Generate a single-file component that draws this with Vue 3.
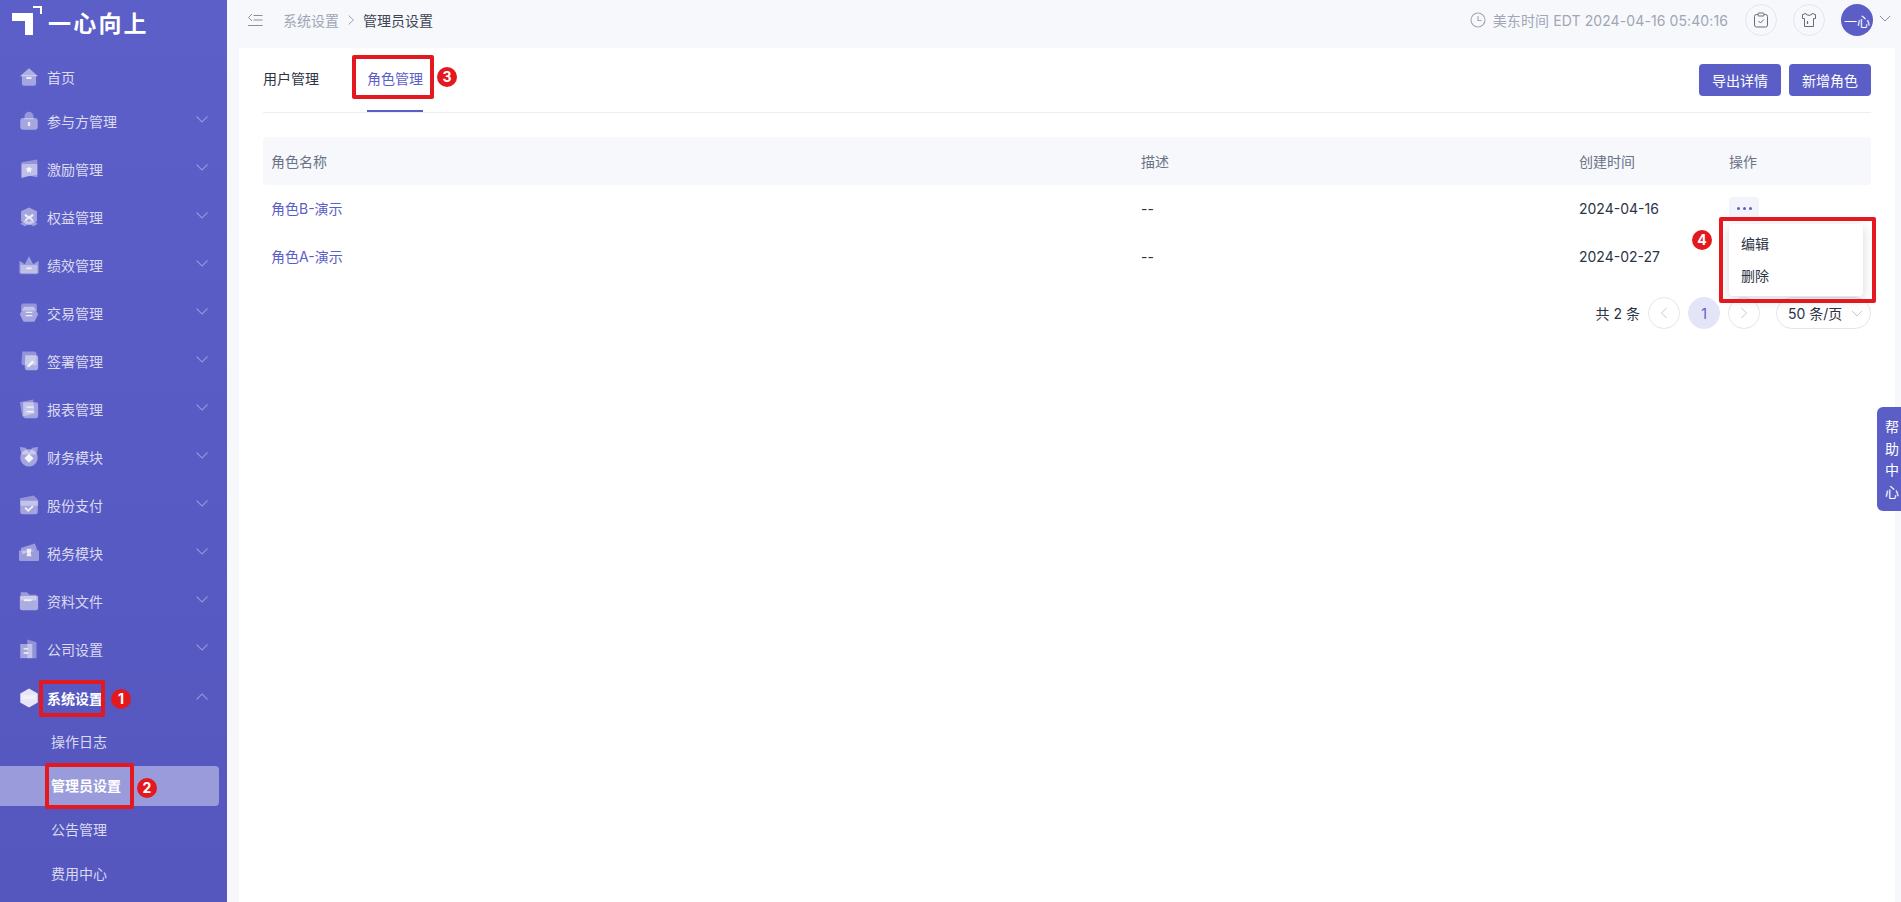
<script setup>
const shapes = {
  home: [['M12 1.500 23 11H1Z', .5], ['M3.500 10h17v9.500a3 3 0 0 1-3 3h-11a3 3 0 0 1-3-3Z', .45], ['M9 12h6v2.400H9Z', .8]],
  people: [['M12 1a5.500 5.500 0 0 1 5.500 5.500V10h-11V6.500A5.500 5.500 0 0 1 12 1Z', .35], ['M5 8.500h14a3.500 3.500 0 0 1 3.500 3.500v7a3.500 3.500 0 0 1-3.500 3.500H5A3.500 3.500 0 0 1 1.500 19v-7A3.500 3.500 0 0 1 5 8.500Z', .45], ['M12 13a1.500 1.500 0 0 1 1.400 2v3h-2.800v-3A1.500 1.500 0 0 1 12 13Z', .8]],
  flag: [['M3 4 22 .5V19l-19 3Z', .35], ['M3 6h19v16l-9.500-2L3 23Z', .4], ['M12 8.500l1.300 2.600 2.800.4-2 2 .5 2.800-2.600-1.400-2.600 1.400.5-2.800-2-2 2.800-.4Z', .85]],
  shield: [['M12 .5 21.500 5v12L12 22l-9.500-5V5Z', .45], ['M1.500 20l7-4 3.500 2 3.500-2 7 4-5 3-5.500-2.500L7 23Z', .4], ['M7.500 8l4.500 3 4.500-3 1 2.500-3 2.500 3 3-1 1-4.500-3-4.500 3-1-1 3-3-3-2.500Z', .8]],
  crown: [['M.5 7l6.500 4L12 1.500 17 11l6.500-4v15H.5Z', .4], ['M2 12h20v11H2Z', .35], ['M9 15h6v2H9Z', .8]],
  swap: [['M5 .5h14a2.500 2.500 0 0 1 2.500 2.500v6h-19V3A2.500 2.500 0 0 1 5 .5Z', .35], ['M6 4.500h12l5 9-4.500 9h-13L1 13.500Z', .45], ['M8 10.500h8v1.400H8ZM8 14.500h8v1.400H8Z', .8]],
  sign: [['M4 .5h14a3 3 0 0 1 3 3V17H6a3 3 0 0 1-3-3Z', .35], ['M7.500 5h13A2.500 2.500 0 0 1 23 7.500v13a2.500 2.500 0 0 1-2.500 2.500h-11A2.500 2.500 0 0 1 7 20.500Z', .5], ['M10 17.500l6-6 2 2-6 6h-2Z', .85]],
  report: [['M1 4 17 .5l2 17L4 21Z', .35], ['M5 4h15.500A2.500 2.500 0 0 1 23 6.500v14a2.500 2.500 0 0 1-2.500 2.500H7.500A2.500 2.500 0 0 1 5 20.500Z', .45], ['M9 9h8.500v1.600H9ZM9 14.500h8.500v1.600H9Z', .8]],
  medal: [['M1 0 8 1l4 6 4-6 7-1-2 9H3Z', .4], ['M12 2.500a10.500 10.500 0 1 1 0 21 10.500 10.500 0 0 1 0-21Z', .45], ['M12 8l5.500 5.500L12 19l-5.500-5.500Z', .9]],
  folderCheck: [['M1 4 18 .5 23 6v7H2Z', .35], ['M1.500 7h21v13a3 3 0 0 1-3 3h-15a3 3 0 0 1-3-3Z', .45], ['M8 14.500l3 3 5-5 1.500 1.500-6.500 6.500-4.500-4.500Z', .85]],
  ticket: [['M2 6 19 .5l3 8-18 5Z', .4], ['M0 9h24v11a1.500 1.500 0 0 1-1.500 1.500h-21A1.500 1.500 0 0 1 0 20Z', .4], ['M9 7h6l-1 4.500 1 4.500H9l1-4.500Z', .8]],
  folder: [['M2 1.500h7.500l3 3H21v7H2Z', .4], ['M1 6h22v14a3 3 0 0 1-3 3H4a3 3 0 0 1-3-3Z', .5], ['M6 10h9v2.200H6Z', .8]],
  company: [['M10 .5 21 4v19H10Z', .35], ['M1.500 6H16v17H1.500Z', .45], ['M5.500 11h5.500v1.600H5.500ZM5.500 16h5.500v1.600H5.500Z', .9]],
  system: [['M12 .5 22.500 6.500v11L12 23.500 1.500 17.500v-11Z', .85], ['M3 8.500h18v5.500H3Z', .35], ['M7 10.500h10v1.500H7Z', .5]],
}

const navItems = [
  { label: '首页', icon: 'home' },
  { label: '参与方管理', icon: 'people', arrow: true },
  { label: '激励管理', icon: 'flag', arrow: true },
  { label: '权益管理', icon: 'shield', arrow: true },
  { label: '绩效管理', icon: 'crown', arrow: true },
  { label: '交易管理', icon: 'swap', arrow: true },
  { label: '签署管理', icon: 'sign', arrow: true },
  { label: '报表管理', icon: 'report', arrow: true },
  { label: '财务模块', icon: 'medal', arrow: true },
  { label: '股份支付', icon: 'folderCheck', arrow: true },
  { label: '税务模块', icon: 'ticket', arrow: true },
  { label: '资料文件', icon: 'folder', arrow: true },
  { label: '公司设置', icon: 'company', arrow: true },
  { label: '系统设置', icon: 'system', arrow: true, open: true },
]

const subItems = [
  { label: '操作日志' },
  { label: '管理员设置', active: true },
  { label: '公告管理' },
  { label: '费用中心' },
]

const roles = [
  { name: '角色B-演示', desc: '--', created: '2024-04-16', more: true },
  { name: '角色A-演示', desc: '--', created: '2024-02-27' },
]
</script>

<template>
  <div class="page">
    <aside class="sidebar">
      <div class="logo">
        <svg class="logo-mark" width="31" height="30" viewBox="0 0 31 30">
          <path d="M1 7h21v22h-8V15H1Z" fill="#fff" />
          <path d="M22 0h9v8h-2V2h-7Z" fill="#fff" />
        </svg>
        <span class="logo-text">一心向上</span>
      </div>

      <nav class="menu">
        <div
          v-for="item in navItems"
          :key="item.label"
          class="menu-item"
          :class="{ open: item.open }"
        >
          <svg class="menu-icon" width="20" height="20" viewBox="0 0 24 24">
            <path v-for="(s, i) in shapes[item.icon]" :key="i" :d="s[0]" fill="#fff" :fill-opacity="s[1]" />
          </svg>
          <span class="menu-label">{{ item.label }}</span>
          <svg v-if="item.arrow" class="menu-arrow" width="12" height="7" viewBox="0 0 12 7">
            <path :d="item.open ? 'M.5 6.500 6 1l5.500 5.500' : 'M.5 .5 6 6l5.500-5.500'" fill="none" stroke="currentColor" stroke-width="1.100" />
          </svg>
        </div>
        <div
          v-for="sub in subItems"
          :key="sub.label"
          class="sub-item"
          :class="{ active: sub.active }"
        >{{ sub.label }}</div>
      </nav>
    </aside>

    <div class="main">
      <header class="topbar">
        <svg class="collapse" width="16" height="14" viewBox="0 0 16 14">
          <path d="M5 1 1.500 4.500 5 8M6.500 2.500H15.500M6.500 7H15.500M1 12.500H15.500" fill="none" stroke="#8b90a0" stroke-width="1" />
        </svg>
        <div class="crumbs">
          <span class="crumb-muted">系统设置</span>
          <svg width="8" height="12" viewBox="0 0 8 12"><path d="M1.500 1.500 6.500 6l-5 4.500" fill="none" stroke="#a0a6b5" stroke-width="1" /></svg>
          <span class="crumb-current">管理员设置</span>
        </div>
        <div class="topbar-right">
          <svg width="16" height="16" viewBox="0 0 16 16">
            <circle cx="8" cy="8" r="7" fill="none" stroke="#a0a6b5" stroke-width="1.100" />
            <path d="M8 4v4.500h3.500" fill="none" stroke="#a0a6b5" stroke-width="1.100" />
          </svg>
          <span class="clock">美东时间 EDT 2024-04-16 05:40:16</span>
          <span class="round-btn first">
            <svg width="16" height="16" viewBox="0 0 16 16">
              <rect x="1.500" y="2.500" width="13" height="12.500" rx="2" fill="none" stroke="#666c7e" stroke-width="1" />
              <rect x="5" y="1" width="6" height="3" rx=".8" fill="#f7f8fc" stroke="#666c7e" stroke-width="1" />
              <path d="M5.500 9 7.500 11 10.800 7.500" fill="none" stroke="#666c7e" stroke-width="1" />
            </svg>
          </span>
          <span class="round-btn">
            <svg width="16" height="16" viewBox="0 0 16 16">
              <path d="M5 1.500 1.500 2.500v4h2v8h9v-8h2v-4L11 1.500a3 1.800 0 0 1-6 0Z" fill="none" stroke="#666c7e" stroke-width="1" />
              <path d="M6.500 9v3" stroke="#666c7e" stroke-width="1.200" />
            </svg>
          </span>
          <span class="avatar">一心</span>
          <svg class="avatar-arrow" width="12" height="7" viewBox="0 0 12 7"><path d="M1 1l5 5 5-5" fill="none" stroke="#8b90a0" stroke-width="1" /></svg>
        </div>
      </header>

      <section class="card">
        <div class="tabs-row">
          <div class="tabs">
            <span class="tab">用户管理</span>
            <span class="tab active">角色管理</span>
          </div>
          <div class="actions">
            <button class="primary-btn">导出详情</button>
            <button class="primary-btn">新增角色</button>
          </div>
        </div>

        <div class="table">
          <div class="row head">
            <div>角色名称</div>
            <div>描述</div>
            <div>创建时间</div>
            <div>操作</div>
          </div>
          <div v-for="role in roles" :key="role.name" class="row body-row">
            <div class="role-name">{{ role.name }}</div>
            <div>{{ role.desc }}</div>
            <div>{{ role.created }}</div>
            <div>
              <span v-if="role.more" class="more-btn"><i></i><i></i><i></i></span>
            </div>
          </div>
          <div class="dropdown">
            <div class="dropdown-item">编辑</div>
            <div class="dropdown-item">删除</div>
          </div>
        </div>

        <div class="pager">
          <span class="pager-total">共 2 条</span>
          <span class="pager-btn">
            <svg width="8" height="12" viewBox="0 0 8 12"><path d="M6.500 1 1.500 6l5 5" fill="none" stroke="#c4c8d4" stroke-width="1" /></svg>
          </span>
          <span class="pager-btn current">1</span>
          <span class="pager-btn last">
            <svg width="8" height="12" viewBox="0 0 8 12"><path d="M1.500 1 6.500 6l-5 5" fill="none" stroke="#c4c8d4" stroke-width="1" /></svg>
          </span>
          <span class="pager-size">
            50 条/页
            <svg width="12" height="7" viewBox="0 0 12 7"><path d="M1 1l5 5 5-5" fill="none" stroke="#c4c8d4" stroke-width="1" /></svg>
          </span>
        </div>
      </section>
    </div>

    <div class="help">帮<br />助<br />中<br />心</div>

    <!-- tutorial markers drawn over the screenshot -->
    <span class="mark mark-a"></span>
    <span class="mark mark-b"></span>
    <span class="mark mark-c"></span>
    <span class="mark mark-d"></span>
    <span class="badge badge-a">1</span>
    <span class="badge badge-b">2</span>
    <span class="badge badge-c">3</span>
    <span class="badge badge-d">4</span>
  </div>
</template>

<style>
html, body {
  margin: 0;
  overflow: hidden;
}
</style>

<style scoped>
.page {
  position: relative;
  display: flex;
  height: 902px;
  overflow: hidden;
  background: #f7f8fc;
  color: #2c3345;
  font-family: Inter, "Noto Sans CJK SC", sans-serif;
  font-size: 14px;
}

.sidebar {
  width: 227px;
  flex: none;
  background: linear-gradient(180deg, #5d5fc9, #5557bf);
}

.logo {
  display: flex;
  align-items: center;
  height: 48px;
  padding-left: 11px;
}

.logo-mark {
  flex: none;
  align-self: flex-start;
  margin-top: 6px;
}

.logo-text {
  margin-left: 6px;
  color: #fff;
  font-size: 23px;
  font-weight: 700;
  letter-spacing: 2.200px;
  line-height: 26px;
}

.menu {
  padding-top: 7px;
}

.menu-item {
  display: flex;
  align-items: center;
  height: 44px;
  margin-bottom: 4px;
  padding-left: 19px;
  padding-right: 19px;
  color: rgba(255, 255, 255, 0.78);
}

.menu-item:first-child {
  margin-bottom: 0;
}

.menu-item.open {
  margin-top: 5px;
  margin-bottom: 0;
  color: #fff;
  font-weight: 700;
}

.menu-icon {
  flex: none;
  filter: blur(0.3px);
}

.menu-label {
  flex: 1;
  margin-left: 8px;
}

.menu-arrow {
  flex: none;
  margin-top: -4px;
  color: rgba(255, 255, 255, 0.35);
}

.sub-item {
  height: 44px;
  margin-right: 8px;
  padding-left: 51px;
  line-height: 44px;
  color: rgba(255, 255, 255, 0.78);
}

.sub-item.active {
  height: 40px;
  margin-top: 2px;
  margin-bottom: 2px;
  border-radius: 0 4px 4px 0;
  background: #9a9bdb;
  color: #fff;
  font-weight: 700;
  line-height: 40px;
}

.main {
  flex: 1;
  min-width: 0;
  display: flex;
  flex-direction: column;
  padding: 0 6px 0 12px;
}

.topbar {
  display: flex;
  align-items: center;
  height: 40px;
  margin-bottom: 8px;
  padding-left: 8px;
}

.collapse {
  flex: none;
}

.crumbs {
  display: flex;
  align-items: center;
  gap: 8px;
  margin-left: 20px;
}

.crumb-muted {
  color: #a0a6b5;
}

.crumb-current {
  color: #3d4456;
}

.topbar-right {
  display: flex;
  align-items: center;
  margin-left: auto;
  margin-right: 4px;
}

.clock {
  margin-left: 7px;
  color: #a0a6b5;
  letter-spacing: 0.100px;
}

.round-btn {
  display: flex;
  align-items: center;
  justify-content: center;
  width: 30px;
  height: 30px;
  margin-left: 16px;
  border: 1px solid #e4e6ee;
  border-radius: 50%;
}

.round-btn.first {
  margin-left: 17px;
}

.avatar {
  display: flex;
  align-items: center;
  justify-content: center;
  width: 32px;
  height: 32px;
  margin-left: 16px;
  border-radius: 50%;
  background: #5b5ec7;
  color: #fff;
  font-size: 13px;
}

.avatar-arrow {
  margin-left: 6px;
  margin-top: -4px;
}

.card {
  flex: 1;
  padding: 16px 24px 0;
  background: #fff;
}

.tabs-row {
  display: flex;
  justify-content: space-between;
  height: 48px;
  border-bottom: 1px solid #eceef6;
}

.tabs {
  display: flex;
  gap: 48px;
}

.tab {
  height: 46px;
  line-height: 30px;
}

.tab.active {
  border-bottom: 2px solid #5b5ec7;
  color: #5b5ec7;
}

.actions {
  display: flex;
  gap: 8px;
}

.primary-btn {
  width: 82px;
  height: 32px;
  padding: 0;
  border: none;
  border-radius: 4px;
  background: #5b5ec7;
  color: #fff;
  font: inherit;
}

.table {
  position: relative;
  margin-top: 24px;
}

.row {
  display: grid;
  grid-template-columns: 870px 438px 150px 1fr;
  align-items: center;
  height: 48px;
  padding-left: 8px;
  box-sizing: border-box;
}

.row.head {
  border-radius: 4px;
  background: #f7f8fc;
  color: #6b7285;
}

.body-row {
  padding-bottom: 2px;
}

.role-name {
  color: #5b5ec7;
}

.more-btn {
  display: flex;
  align-items: center;
  justify-content: center;
  gap: 3px;
  width: 30px;
  height: 24px;
  margin-top: 1px;
  border-radius: 4px;
  background: #f3f4fb;
}

.more-btn i {
  width: 3px;
  height: 3px;
  border-radius: 50%;
  background: #5b5ec7;
}

.dropdown {
  position: absolute;
  top: 87px;
  left: 1466px;
  width: 134px;
  padding: 4px 0;
  border-radius: 4px;
  background: #fff;
  box-shadow: 0 3px 12px rgba(30, 35, 70, 0.18);
}

.dropdown-item {
  height: 32px;
  padding-left: 12px;
  line-height: 32px;
}

.pager {
  display: flex;
  align-items: center;
  justify-content: flex-end;
  margin-top: 16px;
  height: 32px;
}

.pager-total {
  margin-right: 8px;
}

.pager-btn {
  display: flex;
  align-items: center;
  justify-content: center;
  box-sizing: border-box;
  width: 32px;
  height: 32px;
  margin-right: 8px;
  border: 1px solid #e4e6ee;
  border-radius: 50%;
}

.pager-btn.current {
  border-color: #e3e4f8;
  background: #e3e4f8;
  color: #5b5ec7;
}

.pager-btn.last {
  margin-right: 16px;
}

.pager-size {
  display: flex;
  align-items: center;
  justify-content: space-between;
  box-sizing: border-box;
  width: 95px;
  height: 32px;
  padding: 0 7px 0 11px;
  border: 1px solid #e4e6ee;
  border-radius: 16px;
}

.help {
  position: absolute;
  top: 407px;
  right: 0;
  width: 24px;
  height: 104px;
  box-sizing: border-box;
  padding: 9px 0 0 8px;
  border-radius: 6px 0 0 6px;
  background: #5b5ec7;
  color: #fff;
  line-height: 21.500px;
}

.mark {
  position: absolute;
  box-sizing: border-box;
  border: 4px solid #e3191f;
  border-radius: 2px;
}

.mark-a { left: 39px; top: 680px; width: 66px; height: 37px; }
.mark-b { left: 45px; top: 763px; width: 89px; height: 46px; }
.mark-c { left: 352px; top: 55px; width: 82px; height: 44px; }
.mark-d { left: 1719px; top: 217px; width: 157px; height: 86px; }

.badge {
  position: absolute;
  width: 20px;
  height: 20px;
  border-radius: 50%;
  background: #e3191f;
  color: #fff;
  font-weight: 700;
  font-size: 14px;
  line-height: 20px;
  text-align: center;
}

.badge-a { left: 111px; top: 689px; }
.badge-b { left: 137px; top: 778px; }
.badge-c { left: 437px; top: 67px; }
.badge-d { left: 1692px; top: 230px; }
</style>
